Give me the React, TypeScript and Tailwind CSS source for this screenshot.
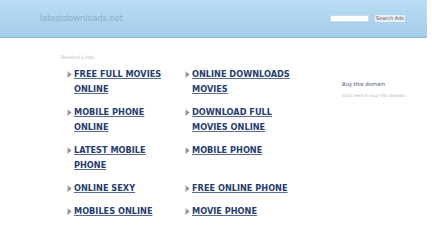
import React from "react";

const col1 = [
  "FREE FULL MOVIES ONLINE",
  "MOBILE PHONE ONLINE",
  "LATEST MOBILE PHONE",
  "ONLINE SEXY",
  "MOBILES ONLINE",
];
const col2 = [
  "ONLINE DOWNLOADS MOVIES",
  "DOWNLOAD FULL MOVIES ONLINE",
  "MOBILE PHONE",
  "FREE ONLINE PHONE",
  "MOVIE PHONE",
];

function Arrow() {
  return (
    <svg width="5" height="7" viewBox="0 0 5 7" className="shrink-0 mt-[4px]">
      <defs>
        <linearGradient id="ag" x1="0" y1="0" x2="1" y2="1">
          <stop offset="0" stopColor="#b5b5b5" />
          <stop offset="1" stopColor="#6f6f6f" />
        </linearGradient>
      </defs>
      <polygon points="0.5,0 4.5,3.5 0.5,7" fill="url(#ag)" />
    </svg>
  );
}

function Item({ text }: { text: string }) {
  return (
    <div className="flex gap-[2px] items-start">
      <Arrow />
      <a
        href="#"
        className="w-[104px] font-bold text-[8.2px] leading-[15px] text-[#263d6c] underline decoration-[#5a6d96] underline-offset-[1px]"
        style={{ fontFamily: '"DejaVu Sans", sans-serif' }}
      >
        {text}
      </a>
    </div>
  );
}

export default function App() {
  return (
    <div className="w-[432px] h-[243px] bg-white overflow-hidden" style={{ fontFamily: '"DejaVu Sans", sans-serif' }}>
      <div className="w-[427px] h-[38px] bg-gradient-to-b from-[#b9def4] to-[#a3cce9] border-b border-[#93bbdb] flex items-center pl-[40px] pr-[22px]">
        <div className="text-[8.2px] text-[#8eadc9] flex-1 leading-none">latestdownloads.net</div>
        <div className="flex items-center gap-[6px]">
          <div className="w-[39px] h-[7px] bg-white border border-[#c9dbe8]" />
          <div className="w-[30px] h-[7px] bg-[#e9eef2] text-[5px] leading-[7px] text-center text-[#555]">Search Ads</div>
        </div>
      </div>
      <div className="flex">
        <div className="pl-[61px] pt-[16px] w-[335px]">
          <div className="text-[5px] text-[#c2c2c2] leading-[6px]">Related Links</div>
          <div className="pl-[6px] mt-[7px] flex flex-col gap-[8px]">
            {col1.map((t, i) => (
              <div key={i} className="grid grid-cols-[118px_118px]">
                <Item text={t} />
                <Item text={col2[i]} />
              </div>
            ))}
          </div>
        </div>
        <div className="pl-[7px] pt-[42px]">
          <div className="text-[5.3px] text-[#3f5079] leading-[8px]">Buy this domain</div>
          <div className="text-[4.3px] text-[#a9b8cf] leading-[8px] mt-[4px]">Click here to buy this domain.</div>
        </div>
      </div>
    </div>
  );
}
